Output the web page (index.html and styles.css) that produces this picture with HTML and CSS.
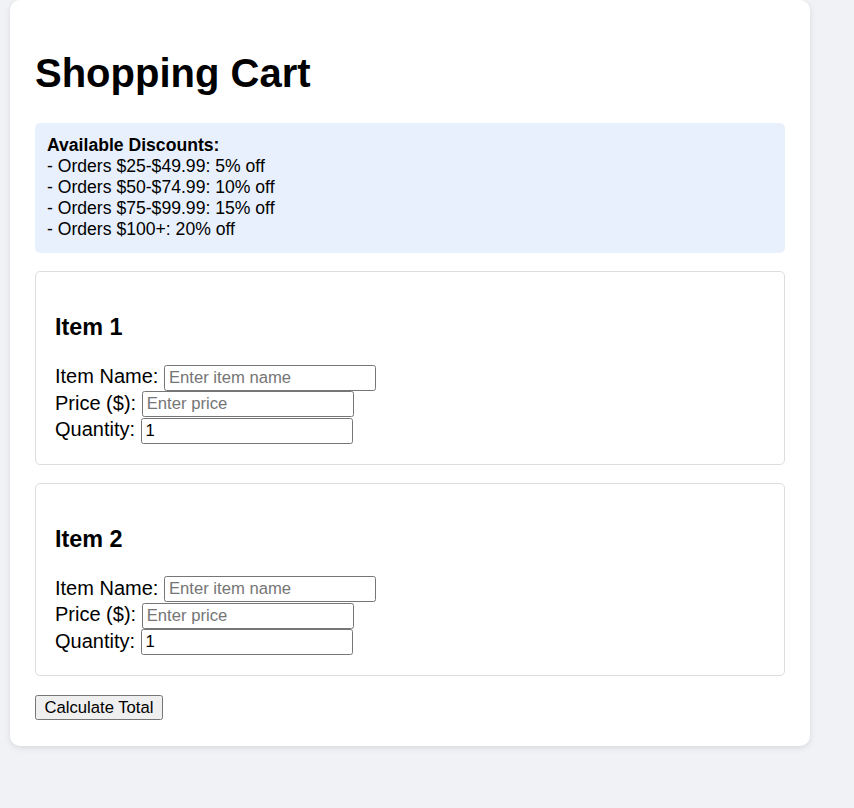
FILE: index.html
```html
<!DOCTYPE html>
<html lang="en">
<head>
<meta charset="utf-8">
<title>Shopping Cart</title>
<link rel="stylesheet" href="styles.css">
</head>
<body>
<div class="container">
  <h1 class="title">Shopping Cart</h1>
  <div class="discounts">
    <strong>Available Discounts:</strong><br>
    - Orders $25-$49.99: 5% off<br>
    - Orders $50-$74.99: 10% off<br>
    - Orders $75-$99.99: 15% off<br>
    - Orders $100+: 20% off
  </div>
  <div class="item">
    <h3 class="item-title">Item 1</h3>
    <div class="row"><label>Item Name:</label> <input class="field" type="text" placeholder="Enter item name"></div>
    <div class="row"><label>Price ($):</label> <input class="field" type="text" placeholder="Enter price"></div>
    <div class="row"><label>Quantity:</label> <input class="field" type="text" value="1"></div>
  </div>
  <div class="item">
    <h3 class="item-title">Item 2</h3>
    <div class="row"><label>Item Name:</label> <input class="field" type="text" placeholder="Enter item name"></div>
    <div class="row"><label>Price ($):</label> <input class="field" type="text" placeholder="Enter price"></div>
    <div class="row"><label>Quantity:</label> <input class="field" type="text" value="1"></div>
  </div>
  <button class="calc" type="button">Calculate Total</button>
</div>
</body>
</html>
```
FILE: styles.css
```css
html, body {
  margin: 0;
  padding: 0;
}
body {
  background: #f0f2f5;
  font-family: "Liberation Sans", Arial, sans-serif;
  color: #000;
  padding: 0 10px 62px;
  min-height: 808px;
  box-sizing: border-box;
}
.container {
  width: 800px;
  box-sizing: border-box;
  background: #fff;
  border-radius: 10px;
  box-shadow: 0 2px 6px rgba(0, 0, 0, 0.1);
  padding: 25px 25px 26px;
}
.title {
  font-size: 40px;
  font-weight: bold;
  margin: 25px 0 27px;
  line-height: 46px;
}
.discounts {
  background: #e8f0fe;
  border-radius: 5px;
  padding: 12px 12px 13px;
  font-size: 17.6px;
  line-height: 21px;
  margin-bottom: 18px;
}
.item {
  border: 1px solid #dddddd;
  border-radius: 5px;
  padding: 19px 19px 21px;
  margin-bottom: 18px;
}
.item-title {
  font-size: 23.4px;
  font-weight: bold;
  margin: 23px 0 22px;
  line-height: 27px;
}
.row {
  font-size: 20px;
  height: 26.5px;
  line-height: 26px;
}
.field {
  width: 212px;
  height: 26px;
  box-sizing: border-box;
  border: 1px solid #767676;
  border-radius: 2.5px;
  padding: 1px 4px;
  font-family: "Liberation Sans", Arial, sans-serif;
  font-size: 16.67px;
  color: #000;
  vertical-align: middle;
  margin: 0;
}
.field::placeholder {
  color: #757575;
}
.calc {
  font-family: "Liberation Sans", Arial, sans-serif;
  font-size: 16.67px;
  background: #efefef;
  border: 1px solid #767676;
  border-radius: 2.5px;
  padding: 2px 8.5px;
  height: 25px;
  color: #000;
  margin: 1px 0 0;
}
```
